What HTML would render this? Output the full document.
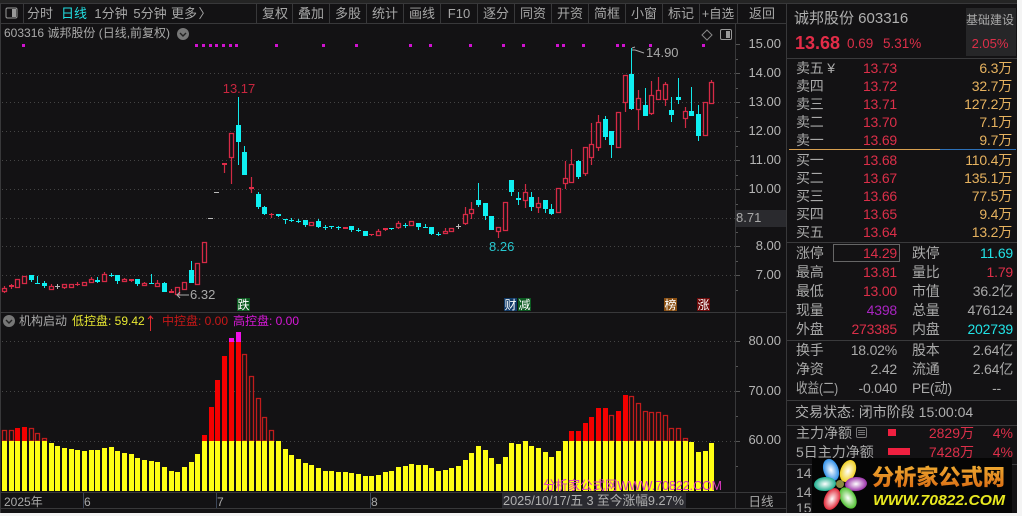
<!DOCTYPE html>
<html><head><meta charset="utf-8"><style>
html,body{margin:0;padding:0;background:#fff;width:1022px;height:516px;overflow:hidden}
svg{display:block;font-family:"Liberation Sans","Noto Sans CJK SC",sans-serif}
text{font-size:13px;fill:#a9a9a9}
.t text{font-size:13px;text-anchor:middle;fill:#a6a6a6}
.r{fill:#dc2f49}.o{fill:#e6b25f}.c{fill:#22e3e6}
.e{text-anchor:end}
.ax text{text-anchor:end;font-size:13px;fill:#b4b4b4}
.q text{font-size:14px;letter-spacing:-.2px}
</style></head><body>
<svg width="1022" height="516" viewBox="0 0 1022 516" xmlns="http://www.w3.org/2000/svg">
<defs>
<linearGradient id="g" x1="0" y1="0" x2="0" y2="1"><stop offset="0" stop-color="#f2b838"/><stop offset="1" stop-color="#d86410"/></linearGradient>
<radialGradient id="p1"><stop offset="0" stop-color="#fff"/><stop offset="1" stop-color="#2f8fe8"/></radialGradient>
<radialGradient id="p2"><stop offset="0" stop-color="#fff"/><stop offset="1" stop-color="#f0d020"/></radialGradient>
<radialGradient id="p3"><stop offset="0" stop-color="#fff"/><stop offset="1" stop-color="#9a2fa8"/></radialGradient>
<radialGradient id="p4"><stop offset="0" stop-color="#fff"/><stop offset="1" stop-color="#50c030"/></radialGradient>
<radialGradient id="p5"><stop offset="0" stop-color="#fff"/><stop offset="1" stop-color="#e02838"/></radialGradient>
<radialGradient id="p6"><stop offset="0" stop-color="#fff"/><stop offset="1" stop-color="#20b090"/></radialGradient>
</defs>
<rect width="1017" height="513" fill="#131214"/>
<rect width="1017" height="3" fill="#242424"/>
<path d="M0 3.5H1017M0 23.5H786M.5 3V513M786.5 3V513M735.5 24V509M0 312.5H786M0 492.5H786M0 508.5H786" stroke="#38383a" fill="none"/>
<!-- toolbar -->
<rect x="6" y="8" width="11" height="10" rx="1.5" fill="none" stroke="#999"/><rect x="12" y="9" width="4" height="8" fill="#999"/>
<path d="M23.5 4V23M256.5 4V23M292.5 4V23M329.5 4V23M366.5 4V23M403.5 4V23M440.5 4V23M477.5 4V23M514.5 4V23M551.5 4V23M588.5 4V23M625.5 4V23M662.5 4V23M699.5 4V23M737.5 4V23" stroke="#38383a"/>
<g class="t">
<text x="40" y="18">分时</text><text x="74" y="18" style="fill:#22dfe2">日线</text><text x="111" y="18">1分钟</text><text x="150" y="18">5分钟</text><text x="184" y="18">更多</text><text x="205" y="18">〉</text>
<text x="275" y="18">复权</text><text x="311" y="18">叠加</text><text x="348" y="18">多股</text><text x="385" y="18">统计</text><text x="422" y="18">画线</text><text x="459" y="18">F10</text><text x="496" y="18">逐分</text><text x="533" y="18">同资</text><text x="570" y="18">开资</text><text x="607" y="18">简框</text><text x="644" y="18">小窗</text><text x="681" y="18">标记</text><text x="718" y="18" style="font-size:12.500px">+自选</text><text x="762" y="18">返回</text>
</g>
<!-- title -->
<text x="4" y="37" style="font-size:12px">603316 诚邦股份 (日线,前复权)</text>
<circle cx="183" cy="34" r="6" fill="#777"/><path d="M180 33l3 3 3-3" stroke="#222" stroke-width="1.4" fill="none"/>
<path d="M707 30l5 5-5 5-5-5z" fill="none" stroke="#888"/>
<rect x="720.5" y="29.5" width="11" height="10" rx="1.5" fill="none" stroke="#999"/><rect x="726" y="31" width="4" height="7" fill="#999"/>
<!-- grid -->
<path d="M2 73.5H735M2 102.5H735M2 131.5H735M2 160.5H735M2 189.5H735M2 218.5H735M2 246.5H735M2 275.5H735M2 341.5H735M2 391.5H735M2 441.5H735" stroke="#444" stroke-dasharray="1 3"/>
<path d="M736 44.5h4M736 59.5h2M736 73.5h4M736 88.5h2M736 102.5h4M736 117.5h2M736 131.5h4M736 146.5h2M736 160.5h4M736 175.5h2M736 189.5h4M736 204.5h2M736 232.5h2M736 246.5h4M736 261.5h2M736 275.5h4M736 290.5h2M736 341.5h4M736 366.5h2M736 391.5h4M736 416.5h2M736 441.5h4M736 466.5h2" stroke="#555"/>
<g class="ax">
<text x="781" y="48">15.00</text><text x="781" y="77">14.00</text><text x="781" y="106">13.00</text><text x="781" y="135">12.00</text><text x="781" y="164">11.00</text><text x="781" y="193">10.00</text><text x="781" y="250">8.00</text><text x="781" y="279">7.00</text>
<text x="781" y="345">80.00</text><text x="781" y="395">70.00</text><text x="781" y="444">60.00</text>
</g>
<rect x="736" y="210" width="50" height="17" fill="#2a2a2e"/><text x="736" y="222" style="fill:#aaa">8.71</text>
<!-- pink dots -->
<path d="M22 44h3v3h-3zM195 44h3v3h-3zM202 44h3v3h-3zM209 44h3v3h-3zM215 44h3v3h-3zM222 44h3v3h-3zM229 44h3v3h-3zM235 44h3v3h-3zM275 44h3v3h-3zM322 44h3v3h-3zM355 44h3v3h-3zM409 44h3v3h-3zM429 44h3v3h-3zM469 44h3v3h-3zM502 44h3v3h-3zM522 44h3v3h-3zM556 44h3v3h-3zM562 44h3v3h-3zM582 44h3v3h-3zM616 44h3v3h-3zM622 44h3v3h-3zM649 44h3v3h-3zM702 44h3v3h-3z" fill="#d012d0"/>
<!-- wicks red -->
<path stroke="#d02a44" stroke-width="1.2" fill="none" d="M4.5 286V293M11.5 284V289M24.5 276V284M51.5 284V289M64.5 284V289M71.5 284V288M77.5 282V286M84.5 282V286M91.5 277V283M104.5 272V281M124.5 278V282M131.5 279V282M144.5 282V285M157.5 280V287M171.5 289V293M197.5 263V285M224.5 163V173M231.5 133V184M251.5 177V193M271.5 213V218M371.5 234V236M378.5 229V236M385.5 228V231M398.5 221V229M445.5 228V234M451.5 228V232M465.5 207V225M471.5 202V219M498.5 227V238M525.5 184V208M538.5 197V213M565.5 161V189M571.5 149V183M585.5 147V176M591.5 123V165M598.5 115V151M625.5 75V112M638.5 90V130M651.5 81V115M658.5 77V99M665.5 82V106M685.5 107V128M711.5 80V103"/>
<!-- red solid -->
<path fill="#e02c48" d="M9 285h5v2h-5zM75 284h5v1h-5zM129 279h5v2h-5zM169 291h5v2h-5zM222 163h5v2h-5zM249 187h5v2h-5zM269 214h5v1h-5zM343 227h5v2h-5zM369 234h5v1h-5zM383 228h5v2h-5z"/>
<!-- red hollow -->
<path stroke="#d62a46" stroke-width="1.3" fill="#131214" d="M2.5 288.5h4V291.5h-4zM15.5 279.5h4V287.5h-4zM22.5 276.5h4V283.5h-4zM49.5 286.5h4V289.5h-4zM62.5 284.5h4V287.5h-4zM69.5 284.5h4V287.5h-4zM82.5 282.5h4V285.5h-4zM89.5 279.5h4V282.5h-4zM102.5 274.5h4V281.5h-4zM122.5 279.5h4V281.5h-4zM142.5 283.5h4V285.5h-4zM155.5 283.5h4V286.5h-4zM175.5 287.5h4V294.5h-4zM182.5 282.5h4V289.5h-4zM195.5 263.5h4V284.5h-4zM202.5 242.5h4V262.5h-4zM229.5 133.5h4V157.5h-4zM309.5 222.5h4V225.5h-4zM376.5 231.5h4V235.5h-4zM396.5 223.5h4V227.5h-4zM409.5 221.5h4V225.5h-4zM443.5 231.5h4V233.5h-4zM449.5 228.5h4V231.5h-4zM463.5 214.5h4V223.5h-4zM469.5 209.5h4V213.5h-4zM496.5 227.5h4V231.5h-4zM503.5 202.5h4V230.5h-4zM523.5 192.5h4V200.5h-4zM536.5 203.5h4V207.5h-4zM556.5 188.5h4V212.5h-4zM563.5 178.5h4V183.5h-4zM569.5 164.5h4V182.5h-4zM583.5 147.5h4V173.5h-4zM589.5 144.5h4V157.5h-4zM596.5 122.5h4V147.5h-4zM616.5 112.5h4V147.5h-4zM623.5 75.5h4V102.5h-4zM636.5 98.5h4V109.5h-4zM649.5 95.5h4V113.5h-4zM656.5 90.5h4V99.5h-4zM663.5 84.5h4V99.5h-4zM683.5 111.5h4V118.5h-4zM703.5 102.5h4V135.5h-4zM709.5 82.5h4V103.5h-4z"/>
<!-- cyan wicks -->
<path stroke="#12e8ea" fill="none" d="M31.5 275V282M37.5 276V284M44.5 281V288M97.5 277V283M111.5 273V277M117.5 275V284M137.5 279V286M151.5 274V284M164.5 282V292M191.5 261V283M238.5 97V165M244.5 146V175M258.5 192V209M264.5 206V215M278.5 214V217M285.5 219V224M291.5 218V222M298.5 219V223M305.5 220V227M318.5 219V228M325.5 225V230M331.5 226V229M338.5 226V230M351.5 226V232M358.5 228V232M365.5 231V236M391.5 228V230M405.5 223V228M418.5 223V230M425.5 224V228M431.5 227V235M438.5 232V236M478.5 183V207M485.5 203V220M491.5 216V230M511.5 180V196M518.5 192V205M531.5 192V211M545.5 200V213M551.5 204V215M578.5 160V179M605.5 116V140M611.5 131V158M631.5 48V110M645.5 88V116M671.5 97V122M678.5 78V104M691.5 87V116M698.5 105V141"/>
<!-- cyan bodies -->
<path fill="#0ff0f2" d="M29 275h5V280h-5zM35 283h5V284h-5zM42 283h5V286h-5zM95 280h5V282h-5zM109 275h5V276h-5zM115 275h5V281h-5zM135 279h5V284h-5zM149 283h5V284h-5zM162 283h5V292h-5zM189 270h5V283h-5zM236 125h5V142h-5zM242 152h5V175h-5zM256 194h5V207h-5zM262 207h5V214h-5zM276 214h5V216h-5zM283 219h5V220h-5zM289 220h5V221h-5zM296 221h5V222h-5zM303 220h5V225h-5zM316 221h5V227h-5zM323 227h5V228h-5zM329 226h5V227h-5zM336 227h5V228h-5zM349 226h5V230h-5zM356 230h5V231h-5zM363 231h5V236h-5zM389 228h5V229h-5zM403 225h5V226h-5zM416 223h5V227h-5zM423 227h5V228h-5zM429 227h5V234h-5zM436 234h5V235h-5zM476 200h5V205h-5zM483 203h5V216h-5zM489 216h5V230h-5zM509 180h5V192h-5zM516 198h5V200h-5zM529 197h5V207h-5zM543 200h5V209h-5zM549 209h5V214h-5zM576 161h5V177h-5zM603 119h5V137h-5zM609 131h5V145h-5zM629 74h5V109h-5zM643 105h5V116h-5zM669 110h5V115h-5zM676 97h5V100h-5zM689 111h5V116h-5zM696 114h5V136h-5z"/>
<!-- whites -->
<path stroke="#bbb" fill="none" d="M55 286.5h5M57.5 284V289M456 226.5h5M458.5 224V229M214 192.5h5M208 218.5h5"/>
<!-- callouts -->
<text x="239" y="93" class="r" style="text-anchor:middle;font-size:13px;fill:#c8263f">13.17</text>
<text x="646" y="57" style="fill:#a9a9a9">14.90</text>
<path d="M632 48l3-1M632 50h3l9 3" stroke="#aaa" fill="none"/>
<text x="190" y="299" style="fill:#a9a9a9">6.32</text><path d="M189 295h-12m3-3l-3 3 3 3" stroke="#aaa" fill="none"/>
<text x="489" y="251" style="fill:#28c8d0">8.26</text>
<!-- badges -->
<rect x="237" y="298" width="13" height="13" fill="#0b5a20"/><text x="243.500" y="309" style="font-size:12px;fill:#fff;text-anchor:middle">跌</text>
<rect x="504" y="298" width="13" height="13" fill="#113a68"/><text x="510.500" y="309" style="font-size:12px;fill:#fff;text-anchor:middle">财</text>
<rect x="518" y="298" width="13" height="13" fill="#0b5a20"/><text x="524.500" y="309" style="font-size:12px;fill:#fff;text-anchor:middle">减</text>
<rect x="664" y="298" width="13" height="13" fill="#8a4f12"/><text x="670.500" y="309" style="font-size:12px;fill:#fff;text-anchor:middle">榜</text>
<rect x="697" y="298" width="13" height="13" fill="#6e0a0a"/><text x="703.500" y="309" style="font-size:12px;fill:#fff;text-anchor:middle">涨</text>
<!-- indicator header -->
<circle cx="9" cy="321" r="6" fill="#777"/><path d="M6 320l3 3 3-3" stroke="#222" stroke-width="1.4" fill="none"/>
<text x="19" y="325" style="font-size:12px">机构启动</text>
<text x="72" y="325" style="font-size:12px;fill:#e8e832">低控盘: 59.42</text>
<path d="M150.500 331V316m-2.500 3l2.500-3 2.500 3" stroke="#e02c30" fill="none"/>
<text x="162" y="325" style="font-size:12px;fill:#c81818">中控盘: 0.00</text>
<text x="233" y="325" style="font-size:12px;fill:#d818d8">高控盘: 0.00</text>
<!-- red solid bars -->
<path fill="#f40000" d="M15 428h5V441h-5zM22 427h5V441h-5zM202 435h5V441h-5zM209 407h5V441h-5zM215 380h5V441h-5zM222 356h5V441h-5zM229 342h5V441h-5zM236 342h5V441h-5zM569 431h5V441h-5zM576 431h5V441h-5zM583 423h5V441h-5zM589 417h5V441h-5zM596 408h5V441h-5zM603 408h5V441h-5zM616 411h5V441h-5zM623 395h5V441h-5z"/>
<path fill="#f010e8" d="M229 338h5V342h-5zM236 332h5V342h-5z"/>
<path fill="none" stroke="#c01c1c" stroke-width="1.3" d="M2.500 430.500h4V441h-4zM9.500 430.500h4V441h-4zM29.500 428.500h4V441h-4zM35.500 433.500h4V441h-4zM42.500 438.500h4V441h-4zM242.500 354.500h4V441h-4zM249.500 376.500h4V441h-4zM256.500 398.500h4V441h-4zM262.500 417.500h4V441h-4zM269.500 430.500h4V441h-4zM609.500 415.500h4V441h-4zM629.500 396.500h4V441h-4zM636.500 403.500h4V441h-4zM643.500 411.500h4V441h-4zM649.500 412.500h4V441h-4zM656.500 412.500h4V441h-4zM663.500 415.500h4V441h-4zM669.500 428.500h4V441h-4zM676.500 428.500h4V441h-4zM683.500 438.500h4V441h-4z"/>
<!-- yellow bars -->
<path fill="#ffff14" d="M2 441h5V491h-5zM9 441h5V491h-5zM15 441h5V491h-5zM22 441h5V491h-5zM29 441h5V491h-5zM35 441h5V491h-5zM42 441h5V491h-5zM49 443h5V491h-5zM55 446h5V491h-5zM62 448h5V491h-5zM69 449h5V491h-5zM75 450h5V491h-5zM82 451h5V491h-5zM89 450h5V491h-5zM95 450h5V491h-5zM102 448h5V491h-5zM109 447h5V491h-5zM115 451h5V491h-5zM122 453h5V491h-5zM129 454h5V491h-5zM135 458h5V491h-5zM142 460h5V491h-5zM149 461h5V491h-5zM155 462h5V491h-5zM162 467h5V491h-5zM169 471h5V491h-5zM175 472h5V491h-5zM182 467h5V491h-5zM189 462h5V491h-5zM195 454h5V491h-5zM202 441h5V491h-5zM209 441h5V491h-5zM215 441h5V491h-5zM222 441h5V491h-5zM229 441h5V491h-5zM236 441h5V491h-5zM242 441h5V491h-5zM249 441h5V491h-5zM256 441h5V491h-5zM262 441h5V491h-5zM269 441h5V491h-5zM276 441h5V491h-5zM283 449h5V491h-5zM289 455h5V491h-5zM296 459h5V491h-5zM303 463h5V491h-5zM309 465h5V491h-5zM316 468h5V491h-5zM323 471h5V491h-5zM329 471h5V491h-5zM336 472h5V491h-5zM343 472h5V491h-5zM349 473h5V491h-5zM356 474h5V491h-5zM363 476h5V491h-5zM369 476h5V491h-5zM376 475h5V491h-5zM383 472h5V491h-5zM389 471h5V491h-5zM396 467h5V491h-5zM403 466h5V491h-5zM409 464h5V491h-5zM416 465h5V491h-5zM423 465h5V491h-5zM429 468h5V491h-5zM436 471h5V491h-5zM443 470h5V491h-5zM449 468h5V491h-5zM456 466h5V491h-5zM463 460h5V491h-5zM469 453h5V491h-5zM476 446h5V491h-5zM483 450h5V491h-5zM489 458h5V491h-5zM496 464h5V491h-5zM503 457h5V491h-5zM509 443h5V491h-5zM516 444h5V491h-5zM523 441h5V491h-5zM529 446h5V491h-5zM536 448h5V491h-5zM543 452h5V491h-5zM549 457h5V491h-5zM556 451h5V491h-5zM563 441h5V491h-5zM569 441h5V491h-5zM576 441h5V491h-5zM583 441h5V491h-5zM589 441h5V491h-5zM596 441h5V491h-5zM603 441h5V491h-5zM609 441h5V491h-5zM616 441h5V491h-5zM623 441h5V491h-5zM629 441h5V491h-5zM636 441h5V491h-5zM643 441h5V491h-5zM649 441h5V491h-5zM656 441h5V491h-5zM663 441h5V491h-5zM669 441h5V491h-5zM676 441h5V491h-5zM683 441h5V491h-5zM689 442h5V491h-5zM696 452h5V491h-5zM703 451h5V491h-5zM709 443h5V491h-5z"/>
<text x="543" y="490" style="font-size:13px;fill:#d838c0" textLength="179" lengthAdjust="spacingAndGlyphs">分析家公式网WWW.70822.COM</text>
<!-- bottom axis -->
<path d="M83.500 493V508M216.500 493V508M370.500 493V508" stroke="#3c4658"/>
<rect x="502" y="493" width="184" height="15" fill="#2a2a30"/>
<text x="4" y="506" style="font-size:12px">2025年</text><text x="84" y="506" style="font-size:12px">6</text><text x="217" y="506" style="font-size:12px">7</text><text x="371" y="506" style="font-size:12px">8</text>
<text x="503" y="505" style="font-size:13px;fill:#b0b0b0" textLength="181" lengthAdjust="spacingAndGlyphs">2025/10/17/五 3 至今涨幅9.27%</text>
<text x="761" y="506" style="font-size:12.500px;text-anchor:middle">日线</text>
<!-- right panel -->
<text x="794" y="23" style="font-size:15px;fill:#b0b0b0">诚邦股份 603316</text>
<text x="795" y="49" style="font-size:18px;font-weight:bold;fill:#e42c48">13.68</text>
<text x="847" y="48" class="r" style="font-size:13.500px">0.69</text>
<text x="883" y="48" class="r" style="font-size:13.500px">5.31%</text>
<rect x="966" y="8" width="50" height="48" fill="#262628"/>
<text x="990" y="24" style="font-size:12px;text-anchor:middle">基础建设</text>
<text x="990" y="48" class="r" style="font-size:13px;text-anchor:middle">2.05%</text>
<path d="M787 58.500H1017M787 242.500H1017M787 340.500H1017M787 400.500H1017M787 425.500H1017M787 464.500H1017" stroke="#3a3a3c"/>
<path d="M789 149.500H940" stroke="#d8a050"/><path d="M940 149.500H1016" stroke="#2c70b8"/>
<g class="q">
<text x="796" y="73">卖五 ¥</text><text x="897" y="73" class="r e">13.73</text><text x="1012" y="73" class="o e">6.3万</text>
<text x="796" y="91">卖四</text><text x="897" y="91" class="r e">13.72</text><text x="1012" y="91" class="o e">32.7万</text>
<text x="796" y="109">卖三</text><text x="897" y="109" class="r e">13.71</text><text x="1012" y="109" class="o e">127.2万</text>
<text x="796" y="127">卖二</text><text x="897" y="127" class="r e">13.70</text><text x="1012" y="127" class="o e">7.1万</text>
<text x="796" y="145">卖一</text><text x="897" y="145" class="r e">13.69</text><text x="1012" y="145" class="o e">9.7万</text>
<text x="796" y="165">买一</text><text x="897" y="165" class="r e">13.68</text><text x="1012" y="165" class="o e">110.4万</text>
<text x="796" y="183">买二</text><text x="897" y="183" class="r e">13.67</text><text x="1012" y="183" class="o e">135.1万</text>
<text x="796" y="201">买三</text><text x="897" y="201" class="r e">13.66</text><text x="1012" y="201" class="o e">77.5万</text>
<text x="796" y="219">买四</text><text x="897" y="219" class="r e">13.65</text><text x="1012" y="219" class="o e">9.4万</text>
<text x="796" y="237">买五</text><text x="897" y="237" class="r e">13.64</text><text x="1012" y="237" class="o e">13.2万</text>
<rect x="833.500" y="244.500" width="66" height="17" fill="none" stroke="#666"/>
<text x="796" y="258">涨停</text><text x="897" y="258" class="r e">14.29</text><text x="912" y="258">跌停</text><text x="1013" y="258" class="c e">11.69</text>
<text x="796" y="277">最高</text><text x="897" y="277" class="r e">13.81</text><text x="912" y="277">量比</text><text x="1013" y="277" class="r e">1.79</text>
<text x="796" y="296">最低</text><text x="897" y="296" class="r e">13.00</text><text x="912" y="296">市值</text><text x="1013" y="296" class="e">36.2亿</text>
<text x="796" y="315">现量</text><text x="897" y="315" class="e" style="fill:#a824c0">4398</text><text x="912" y="315">总量</text><text x="1013" y="315" class="e">476124</text>
<text x="796" y="334">外盘</text><text x="897" y="334" class="r e">273385</text><text x="912" y="334">内盘</text><text x="1013" y="334" class="c e">202739</text>
<text x="796" y="355">换手</text><text x="897" y="355" class="e">18.02%</text><text x="912" y="355">股本</text><text x="1013" y="355" class="e">2.64亿</text>
<text x="796" y="374">净资</text><text x="897" y="374" class="e">2.42</text><text x="912" y="374">流通</text><text x="1013" y="374" class="e">2.64亿</text>
<text x="796" y="393" textLength="42" lengthAdjust="spacingAndGlyphs">收益(二)</text><text x="897" y="393" class="e">-0.040</text><text x="912" y="393" textLength="40" lengthAdjust="spacingAndGlyphs">PE(动)</text><text x="1001" y="393" class="e">--</text>
</g>
<text x="795" y="417" style="font-size:14px;fill:#b0b0b0">交易状态: 闭市阶段 15:00:04</text>
<text x="796" y="438" style="font-size:14px">主力净额</text>
<rect x="856.500" y="427.500" width="10" height="10" rx="1.500" fill="none" stroke="#777"/><path d="M858 430.500h7M858 432.500h7M858 434.500h7" stroke="#777"/>
<rect x="888" y="429" width="8" height="7" fill="#f02040"/>
<text x="974" y="438" class="r e" style="font-size:14px">2829万</text><text x="1013" y="438" class="r e" style="font-size:14px">4%</text>
<text x="796" y="457" style="font-size:14px">5日主力净额</text>
<rect x="888" y="448" width="22" height="7" fill="#f02040"/>
<text x="974" y="457" class="r e" style="font-size:14px">7428万</text><text x="1013" y="457" class="r e" style="font-size:14px">4%</text>
<text x="796" y="478" style="font-size:14px">14</text><text x="796" y="497" style="font-size:14px">14</text><text x="796" y="513" style="font-size:14px">15</text>
<rect x="787" y="512" width="30" height="1" fill="#131214"/>
<!-- logo -->
<rect x="812" y="458" width="200" height="55" fill="#050505"/>
<g>
<ellipse cx="831" cy="470" rx="7.500" ry="11.500" fill="url(#p1)" transform="rotate(-20 831 470)"/>
<ellipse cx="848" cy="471" rx="7.500" ry="11.500" fill="url(#p2)" transform="rotate(22 848 471)"/>
<ellipse cx="856" cy="484" rx="7" ry="11" fill="url(#p3)" transform="rotate(85 856 484)"/>
<ellipse cx="848" cy="498" rx="7.500" ry="11.500" fill="url(#p4)" transform="rotate(-30 848 498)"/>
<ellipse cx="832" cy="499" rx="7.500" ry="11.500" fill="url(#p5)" transform="rotate(25 832 499)"/>
<ellipse cx="825" cy="484" rx="7" ry="11" fill="url(#p6)" transform="rotate(85 825 484)"/>
<circle cx="840" cy="484" r="4" fill="#8a8a40"/>
</g>
<text x="872" y="485" style="font-size:22px;font-weight:900;fill:url(#g);font-family:'Noto Sans CJK SC',sans-serif" textLength="133" lengthAdjust="spacingAndGlyphs">分析家公式网</text>
<text x="873" y="505" style="font-size:15px;font-weight:bold;font-style:italic;fill:#e8e820" textLength="132" lengthAdjust="spacingAndGlyphs">WWW.70822.COM</text>
<rect x="0" y="513" width="1022" height="3" fill="#f4f4f4"/>
<rect x="1017" y="0" width="5" height="516" fill="#f4f4f4"/>
</svg>
</body></html>
